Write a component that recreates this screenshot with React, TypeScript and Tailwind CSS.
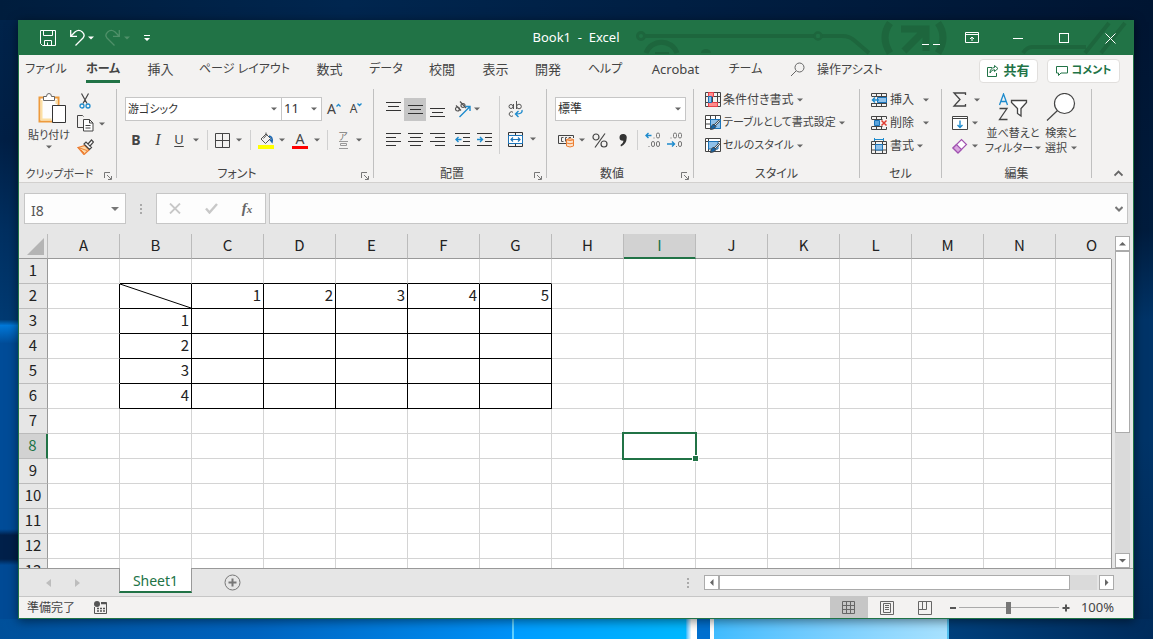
import type { ReactNode } from "react";
import clsx from "clsx";

const INK = "#444444";
const BLUE = "#1e8bcd";

const TABS = [
  { label: "ファイル", width: "w-[54px]", size: "text-xs" },
  { label: "ホーム", width: "w-[60px]", size: "text-xs", active: true },
  { label: "挿入", width: "w-[55px]", size: "text-[13px]" },
  { label: "ページ レイアウト", width: "w-[113px]", size: "text-xs" },
  { label: "数式", width: "w-[57px]", size: "text-[13px]" },
  { label: "データ", width: "w-14", size: "text-xs" },
  { label: "校閲", width: "w-14", size: "text-[13px]" },
  { label: "表示", width: "w-[51px]", size: "text-[13px]" },
  { label: "開発", width: "w-[54px]", size: "text-[13px]" },
  { label: "ヘルプ", width: "w-[60px]", size: "text-xs" },
  { label: "Acrobat", width: "w-[81px]", size: "text-[13px]" },
  { label: "チーム", width: "w-[59px]", size: "text-xs" },
];

const COLUMNS = "ABCDEFGHIJKLMNO".split("");
const ROWS = Array.from({ length: 13 }, (_, i) => i + 1);

const CELLS: Record<string, string> = {
  C2: "1",
  D2: "2",
  E2: "3",
  F2: "4",
  G2: "5",
  B3: "1",
  B4: "2",
  B5: "3",
  B6: "4",
};

type BtnProps = { label: string; className?: string; children?: ReactNode };

const Btn = ({ label, className, children }: BtnProps) => (
  <button
    type="button"
    aria-label={label}
    className={clsx("flex shrink-0 items-center justify-center", className)}
  >
    {children}
  </button>
);

const Arrow = ({ color = "#666666" }: { color?: string }) => (
  <svg width="6" height="4" viewBox="0 0 6 4" className="shrink-0">
    <path d="M0 0.5h6L3 3.5z" fill={color} />
  </svg>
);

const Sep = ({ className }: { className?: string }) => (
  <div className={clsx("w-px shrink-0 bg-[#d0d0d0]", className)} />
);

/* ---------- title bar ---------- */

const TitleArt = () => (
  <svg
    width="498"
    height="34"
    viewBox="0 0 498 34"
    fill="none"
    stroke="#1d663d"
    className="absolute top-0 right-0"
  >
    <circle cx="6" cy="15" r="3.5" strokeWidth="3" />
    <path d="M10 15h169M187 15h20q8 0 13 5l14 12" strokeWidth="4" />
    <circle cx="183" cy="15" r="3.5" strokeWidth="2.5" />
    <path d="M11 32a16.500 16.500 0 0 1 31 0" strokeWidth="5" />
    <path d="M20 32h14" strokeWidth="2" />
    <path d="M66 32a5 4 0 0 1 10 0z" fill="#1d663d" stroke="none" />
    <path d="M255 2q-10 14 0 30M303 2q10 14 0 30" strokeWidth="7" />
    <path d="M266 8h25v22M289 10l-20 20" strokeWidth="7" />
    <path d="M388 32q4-6 9-6h54M450 32L474 2M466 32L490 2" strokeWidth="4" />
  </svg>
);

const TitleBar = () => (
  <header className="relative grid h-[34px] shrink-0 grid-cols-[1fr_auto_1fr] items-center bg-[#217346] text-white">
    <TitleArt />
    <div className="relative flex items-center pl-5">
      <Btn label="上書き保存" className="w-[18px]">
        <svg width="18" height="18" viewBox="0 0 18 18" fill="none" stroke="#fff">
          <path d="M1.5 1.5h15v15H3.5l-2-2z" />
          <path d="M4.500 1.500v5h9v-5M5.500 16.500v-5h7v5M8.500 16v-2.500" />
        </svg>
      </Btn>
      <Btn label="元に戻す" className="ml-3 w-[18px]">
        <svg width="18" height="18" viewBox="0 0 18 18" fill="none" stroke="#fff" strokeWidth="1.3">
          <path d="M1.700 1v6.300H8M2 7l4.200-4.200Q10 0 13.300 3T14 9l-7.500 7.500" />
        </svg>
      </Btn>
      <Btn label="元に戻すの一覧" className="w-2">
        <Arrow color="#ffffff" />
      </Btn>
      <Btn label="やり直し" className="ml-2 w-[18px]">
        <svg width="18" height="18" viewBox="0 0 18 18" fill="none" stroke="#4f9069" strokeWidth="1.3">
          <path d="M16.300 1v6.300H10M16 7l-4.200-4.200Q8 0 4.700 3T4 9l7.500 7.500" />
        </svg>
      </Btn>
      <Btn label="やり直しの一覧" className="ml-0.5 w-2">
        <Arrow color="#4f9069" />
      </Btn>
      <Btn label="クイック アクセスのカスタマイズ" className="ml-3 w-2">
        <svg width="6" height="6" viewBox="0 0 6 6">
          <path d="M0 0h6v1H0zM0 3h6L3 6z" fill="#fff" />
        </svg>
      </Btn>
    </div>
    <h1 className="relative text-[13px] whitespace-pre">Book1  -  Excel</h1>
    <div className="relative flex items-center justify-end">
      <div className="mr-[9px] flex gap-1 pt-3">
        <span className="h-px w-[7px] bg-white" />
        <span className="h-px w-[7px] bg-white" />
      </div>
      <Btn label="リボンの表示オプション" className="h-8 w-[46px]">
        <svg width="14" height="12" viewBox="0 0 14 12" fill="none" stroke="#fff">
          <path d="M0.500 0.500h13v10H0.500zM1 2.500h12M7 9V5M5 7l2-2 2 2" />
        </svg>
      </Btn>
      <Btn label="最小化" className="h-8 w-[46px]">
        <span className="h-px w-[10px] bg-white" />
      </Btn>
      <Btn label="最大化" className="h-8 w-[46px]">
        <span className="size-[10px] border border-white" />
      </Btn>
      <Btn label="閉じる" className="h-8 w-[46px]">
        <svg width="11" height="11" viewBox="0 0 11 11" stroke="#fff">
          <path d="M0.500 0.500l10 10M10.500 0.500l-10 10" />
        </svg>
      </Btn>
    </div>
  </header>
);

/* ---------- ribbon tabs ---------- */

const RibbonTabs = () => (
  <nav className="flex h-[31px] shrink-0 items-center bg-[#f3f2f1] text-[#444444]">
    {TABS.map((tab) => (
      <button
        key={tab.label}
        type="button"
        className={clsx(
          "flex h-[31px] shrink-0 justify-center whitespace-nowrap",
          tab.width,
          tab.size
        )}
      >
        <span
          className={clsx(
            "h-7 pt-0.5 leading-6",
            tab.active && "border-b-[3px] border-[#217346] font-bold"
          )}
        >
          {tab.label}
        </span>
      </button>
    ))}
    <button type="button" className="ml-[15px] flex items-center gap-3 pb-0.5 text-xs whitespace-nowrap">
      <svg width="15" height="15" viewBox="0 0 15 15" fill="none" stroke="#666" className="shrink-0">
        <circle cx="9.500" cy="5.500" r="4.500" />
        <path d="M6 9l-5 5" />
      </svg>
      操作アシスト
    </button>
    <div className="ml-auto flex gap-[9px] pr-[13px] text-[13px] font-bold text-[#217346]">
      <button
        type="button"
        className="flex h-6 w-[59px] items-center justify-center gap-1 rounded-sm border border-[#e1dfdd] bg-white"
      >
        <svg width="12" height="12" viewBox="0 0 12 12" fill="none" stroke="#217346">
          <path d="M5 2.500H0.500v9h9V8M7.500 0.500L11 3.500 7.500 6.500V4.700Q4.500 4.500 3 8q0-5 4.500-5.500z" />
        </svg>
        共有
      </button>
      <button
        type="button"
        className="flex h-6 w-[73px] items-center justify-center gap-1 rounded-sm border border-[#e1dfdd] bg-white text-[11px] whitespace-nowrap"
      >
        <svg width="12" height="12" viewBox="0 0 12 12" fill="none" stroke="#217346" className="shrink-0">
          <path d="M0.500 1.500h11v6.500H5L2.500 10.500V8h-2z" />
        </svg>
        コメント
      </button>
    </div>
  </nav>
);

/* ---------- ribbon ---------- */

type GroupProps = {
  name: string;
  className: string;
  launcher?: boolean;
  children: ReactNode;
};

const Group = ({ name, className, launcher, children }: GroupProps) => (
  <section
    aria-label={name}
    className={clsx("flex shrink-0 flex-col border-r border-[#c0c0c0]", className)}
  >
    <div className="flex h-[77px]">{children}</div>
    <div className="flex h-[13px] items-center leading-3">
      <span
        className={clsx(
          "flex-1 pt-1 text-center whitespace-nowrap",
          name.length > 5 ? "text-[11px]" : "text-xs"
        )}
      >
        {name}
      </span>
      {launcher && (
        <Btn label={name + "の設定"} className="w-4 pt-2">
          <svg width="8" height="8" viewBox="0 0 8 8" fill="none" stroke="#777">
            <path d="M0.500 6V0.500H6M3 3l4 4M7.500 4v3.500H4" />
          </svg>
        </Btn>
      )}
    </div>
  </section>
);

const ClipboardGroup = () => (
  <Group name="クリップボード" className="w-[98px]" launcher>
    <button
      type="button"
      className="ml-1.5 flex w-12 flex-col items-center pt-1 text-[11px] leading-5 whitespace-nowrap"
    >
      <svg width="29" height="32" viewBox="0 0 29 32" fill="none" className="ml-1.5">
        <path d="M1.500 4.500h19v24h-19z" fill="#fdfdfd" stroke="#ed9a3d" strokeWidth="2" />
        <path d="M3.500 7v19.500h10M18.500 7v4" stroke="#fce0a4" strokeWidth="2" />
        <path d="M5.500 7.500v-4h3q0-3 2.500-3t2.500 3h3v4z" fill="#fff" stroke="#666" />
        <path d="M14.500 12.500h13v17h-13z" fill="#fff" stroke="#333" />
      </svg>
      <span>貼り付け</span>
      <Arrow />
    </button>
    <div className="ml-0.5">
      <Btn label="切り取り" className="h-[23px] w-5">
        <svg width="12" height="16" viewBox="0 0 12 16" fill="none">
          <path d="M2.500 0.500l5.500 10M9.500 0.500L4 10.500" stroke={INK} strokeWidth="1.200" />
          <circle cx="3" cy="13" r="2" stroke={BLUE} strokeWidth="1.300" />
          <circle cx="9" cy="13" r="2" stroke={BLUE} strokeWidth="1.300" />
        </svg>
      </Btn>
      <Btn label="コピー" className="h-[23px] gap-[5px] pl-0.5">
        <svg width="17" height="17" viewBox="0 0 17 17" fill="none" stroke="#444">
          <path d="M6 12.500H0.500v-12h5l1 1" />
          <path d="M6.500 4.500h6l3.500 3.500v8H6.500zM12.500 4.500V8H16M8.500 10.500h5M8.500 13h5" fill="#fff" />
        </svg>
        <Arrow />
      </Btn>
      <Btn label="書式のコピー" className="h-[23px] w-5">
        <svg width="17" height="16" viewBox="0 0 17 16" fill="none">
          <path d="M1 8.500l7-2 4 4.500-5 4.500z" fill="#fbd9a8" stroke="#ed7d31" strokeWidth="1.300" />
          <path d="M4 11l3 3M1 8.500l9 3" stroke="#ed7d31" />
          <path d="M7 5l5.500 5.500 2-2L9 3zM11 5l3.500-4 2 2-3.500 4" fill="#fff" stroke="#444" strokeWidth="1.200" />
        </svg>
      </Btn>
    </div>
  </Group>
);

const FontGroup = () => (
  <Group name="フォント" className="w-[257px]" launcher>
    <div className="pt-2 pl-2">
      <div className="flex h-6 items-center">
        <label className="flex h-6 w-[157px] items-center border border-[#c6c6c6] bg-white pr-1">
          <input
            aria-label="フォント名"
            defaultValue="游ゴシック"
            className="min-w-0 flex-1 pl-0.5 text-[11px] text-[#333333] outline-none"
          />
          <Arrow />
        </label>
        <label className="flex h-6 w-10 items-center border border-l-0 border-[#c6c6c6] bg-white pr-1">
          <input
            aria-label="フォント サイズ"
            defaultValue="11"
            className="w-6 min-w-0 flex-1 pl-0.5 text-[13px] text-[#333333] outline-none"
          />
          <Arrow />
        </label>
        <Btn label="フォント サイズの拡大" className="ml-px w-[22px]">
          <span className="text-sm leading-4">A</span>
          <svg width="5" height="13" viewBox="0 0 5 13" fill="none" stroke={BLUE} strokeWidth="1.300">
            <path d="M0.500 3.500l2-2 2 2" />
          </svg>
        </Btn>
        <Btn label="フォント サイズの縮小" className="w-[22px]">
          <span className="text-xs leading-4">A</span>
          <svg width="5" height="13" viewBox="0 0 5 13" fill="none" stroke={BLUE} strokeWidth="1.300">
            <path d="M0.500 0.500l2 2 2-2" />
          </svg>
        </Btn>
      </div>
      <div className="mt-[7px] flex h-6 items-center">
        <Btn label="太字" className="w-[22px] text-sm font-bold">B</Btn>
        <Btn label="斜体" className="w-[22px] font-['Liberation_Serif',serif] text-base italic">I</Btn>
        <Btn label="下線" className="w-5 text-[13px] underline underline-offset-2">U</Btn>
        <Btn label="下線の種類" className="w-3.5">
          <Arrow />
        </Btn>
        <Sep className="ml-1 h-5" />
        <Btn label="罫線" className="ml-0.5 w-6">
          <svg width="15" height="15" viewBox="0 0 15 15" fill="none" stroke="#444">
            <path d="M0.500 0.500h14v14H0.500zM7.500 0.500v14M0.500 7.500h14" />
          </svg>
        </Btn>
        <Btn label="罫線の種類" className="w-2.5">
          <Arrow />
        </Btn>
        <Sep className="ml-1.5 h-5" />
        <Btn label="塗りつぶしの色" className="ml-[3px] w-6">
          <svg width="16" height="17" viewBox="0 0 16 17" fill="none">
            <path d="M8 2L3 7l4.500 4.500L12.500 6.500zM8 2V0.500M5.500 6.500l3.500-4" stroke="#555" />
            <path d="M11 4q4 1 3 6l-2-2.500" stroke="#1a66b0" strokeWidth="1.500" />
            <path d="M0 13h16v4H0z" fill="#ffff00" />
          </svg>
        </Btn>
        <Btn label="塗りつぶしの色一覧" className="w-2">
          <Arrow />
        </Btn>
        <Btn label="フォントの色" className="w-7 flex-col">
          <span className="text-sm leading-[14px]">A</span>
          <span className="h-[3px] w-4 bg-[#ff0000]" />
        </Btn>
        <Btn label="フォントの色一覧" className="w-1.5">
          <Arrow />
        </Btn>
        <Sep className="ml-[7px] h-5" />
        <Btn label="ふりがな" className="ml-0.5 w-[26px] flex-col text-[#777777]">
          <span className="text-[10px] leading-[9px]">ア</span>
          <svg width="9" height="8" viewBox="0 0 9 8" fill="none" stroke="#999">
            <path d="M0 0.500h9M1.500 2.500h6v2h-6zM0 7.500h9" />
          </svg>
        </Btn>
        <Btn label="ふりがなの設定" className="w-1.5">
          <Arrow />
        </Btn>
      </div>
    </div>
  </Group>
);

const Lines = ({ d }: { d: string }) => (
  <svg width="15" height="15" viewBox="0 0 15 15" fill="none" stroke="#333">
    <path d={d} />
  </svg>
);

const AlignGroup = () => (
  <Group name="配置" className="w-[173px]" launcher>
    <div className="pt-2 pl-2">
      <div className="flex h-6 items-center">
        <Btn label="上揃え" className="h-[23px] w-[22px]">
          <Lines d="M0 0.500h15M2 4.500h11M0 8.500h15" />
        </Btn>
        <Btn label="上下中央揃え" className="h-[23px] w-[22px] bg-[#c6c6c6]">
          <Lines d="M0 3.500h15M2 7.500h11M0 11.500h15" />
        </Btn>
        <Btn label="下揃え" className="h-[23px] w-[22px]">
          <Lines d="M0 6.500h15M2 10.500h11M0 14.500h15" />
        </Btn>
        <Btn label="方向" className="ml-0.5 w-6">
          <svg width="17" height="17" viewBox="0 0 17 17" fill="none">
            <g stroke="#555" strokeWidth="1.200">
              <circle cx="3.500" cy="8" r="2" />
              <path d="M2 4.500l5 5M6 0.500l6 6.500" />
              <circle cx="9" cy="4.500" r="2" />
            </g>
            <path d="M5.500 16L15.500 6M11.500 5.500H16V10" stroke={BLUE} strokeWidth="1.400" />
          </svg>
        </Btn>
        <Btn label="方向の一覧" className="w-1.5">
          <Arrow />
        </Btn>
      </div>
      <div className="mt-1.5 flex h-6 items-center">
        <Btn label="左揃え" className="w-[22px]">
          <Lines d="M0 1.500h15M0 5.500h10M0 9.500h15M0 13.500h10" />
        </Btn>
        <Btn label="中央揃え" className="w-[22px]">
          <Lines d="M0 1.500h15M2 5.500h11M0 9.500h15M2 13.500h11" />
        </Btn>
        <Btn label="右揃え" className="w-[22px]">
          <Lines d="M0 1.500h15M5 5.500h10M0 9.500h15M5 13.500h10" />
        </Btn>
        <Btn label="インデントを減らす" className="ml-[3px] w-[22px]">
          <svg width="15" height="15" viewBox="0 0 15 15" fill="none" stroke="#333">
            <path d="M0 1.500h15M8 5.500h7M8 9.500h7M0 13.500h15" />
            <path d="M1 7.500h5.500M3.500 5l-2.500 2.500 2.500 2.500" stroke={BLUE} strokeWidth="1.400" />
          </svg>
        </Btn>
        <Btn label="インデントを増やす" className="w-[22px]">
          <svg width="15" height="15" viewBox="0 0 15 15" fill="none" stroke="#333">
            <path d="M0 1.500h15M8 5.500h7M8 9.500h7M0 13.500h15" />
            <path d="M0 7.500h5.500M3 5l2.500 2.500L3 10" stroke={BLUE} strokeWidth="1.400" />
          </svg>
        </Btn>
      </div>
    </div>
    <Sep className="mt-[7px] ml-1 h-[58px]" />
    <div className="pt-2">
      <div className="flex h-6 items-center">
        <Btn label="折り返して全体を表示する" className="w-8">
          <svg width="16" height="17" viewBox="0 0 16 17" fill="none" stroke="#555">
            <circle cx="3" cy="5.500" r="2" />
            <path d="M5.500 3v5M8.500 0v8" />
            <circle cx="11" cy="5.500" r="2.300" />
            <path d="M5 11.300a2.300 2.300 0 1 0 0 3.500" />
            <path d="M14 9q1 4-6 4M10.500 10L7.500 13l3 3" stroke={BLUE} strokeWidth="1.400" />
          </svg>
        </Btn>
      </div>
      <div className="mt-1.5 flex h-6 items-center">
        <Btn label="セルを結合して中央揃え" className="w-[30px]">
          <svg width="15" height="15" viewBox="0 0 15 15" fill="none" stroke="#333">
            <path d="M0.500 0.500h14v14H0.500zM7.500 0v3M7.500 12v3" />
            <path d="M0.500 3.500h14v8H0.500z" fill="#fff" stroke="#1a73b8" />
            <path d="M3 7.500h9M5 5.500l-2 2 2 2M10 5.500l2 2-2 2" stroke="#1a73b8" strokeWidth="1.200" />
          </svg>
        </Btn>
        <Btn label="結合の一覧" className="w-1.5">
          <Arrow />
        </Btn>
      </div>
    </div>
  </Group>
);

const NumberGroup = () => (
  <Group name="数値" className="w-[147px]" launcher>
    <div className="pt-2 pl-2">
      <div className="relative flex h-6 w-[131px] items-center border border-[#c6c6c6] bg-white">
        <select
          aria-label="表示形式"
          className="h-[22px] w-full appearance-none pl-0.5 text-xs text-[#333333]"
        >
          <option>標準</option>
        </select>
        <span className="pointer-events-none absolute right-1 flex">
          <Arrow />
        </span>
      </div>
      <div className="mt-[7px] flex h-6 items-center">
        <Btn label="通貨表示形式" className="w-[22px]">
          <svg width="17" height="15" viewBox="0 0 17 15" fill="none">
            <path d="M8 10.500H0.500v-8h15V5" stroke="#444" />
            <path d="M5.500 4.500h-2v4h2M9 4.500H7.500v4M13 4.500h-2v2" stroke="#555" />
            <path d="M8.500 6.500v6.500q3.500 2 7 0V6.500q-3.500-1.500-7 0z" fill="#fce4cc" stroke="#ed7d31" />
            <path d="M8.500 6.800q3.500 1.500 7 0M8.500 10q3.500 1.500 7 0" stroke="#ed7d31" />
          </svg>
        </Btn>
        <Btn label="通貨の一覧" className="w-2.5">
          <Arrow />
        </Btn>
        <Btn label="パーセント スタイル" className="ml-px w-6">
          <svg width="16" height="15" viewBox="0 0 16 15" fill="none" stroke="#444" strokeWidth="1.200">
            <circle cx="4" cy="4" r="3" />
            <circle cx="12" cy="11" r="3" />
            <path d="M13 0.500L3 14.500" />
          </svg>
        </Btn>
        <Btn label="桁区切りスタイル" className="w-[22px]">
          <svg width="8" height="13" viewBox="0 0 8 13" fill="#333">
            <path d="M4 0a3.500 3.500 0 0 1 3.700 4Q7.500 10 2 12.500L1.500 11Q4.500 9 4.500 6.800 0.500 7 0.500 3.500A3.500 3.500 0 0 1 4 0z" />
          </svg>
        </Btn>
        <Sep className="ml-[3px] h-5" />
        <Btn label="小数点以下の表示桁数を増やす" className="ml-1 w-[22px]">
          <svg width="16" height="16" viewBox="0 0 16 16" fill="none" stroke="#777">
            <path d="M6.500 3.500H1M3.500 1L1 3.500 3.500 6" stroke={BLUE} strokeWidth="1.400" />
            <rect x="11.500" y="1" width="3" height="5" rx="1.500" />
            <rect x="6.500" y="9.500" width="3" height="5" rx="1.500" />
            <rect x="11.500" y="9.500" width="3" height="5" rx="1.500" />
            <path d="M8.500 6h1M3.500 14.500h1" />
          </svg>
        </Btn>
        <Btn label="小数点以下の表示桁数を減らす" className="w-[22px]">
          <svg width="16" height="16" viewBox="0 0 16 16" fill="none" stroke="#777">
            <path d="M0 12h7.500M5 9.500L7.500 12 5 14.500" stroke={BLUE} strokeWidth="1.400" />
            <rect x="6.500" y="1" width="3" height="5" rx="1.500" />
            <rect x="11.500" y="1" width="3" height="5" rx="1.500" />
            <rect x="11.500" y="9.500" width="3" height="5" rx="1.500" />
            <path d="M3.500 6h1M9 14.500h1" />
          </svg>
        </Btn>
      </div>
    </div>
  </Group>
);

type RowBtnProps = { icon: ReactNode; label: string; arrow?: string; small?: boolean };

const RowBtn = ({ icon, label, arrow, small }: RowBtnProps) => (
  <button
    type="button"
    className={clsx(
      "flex h-[23px] items-center pb-0.5 whitespace-nowrap",
      small ? "text-[11px]" : "text-xs"
    )}
  >
    {icon}
    <span className="ml-0.5">{label}</span>
    <span className={clsx("flex", arrow ?? "ml-[3px]")}>
      <Arrow />
    </span>
  </button>
);

const Brush = () => (
  <>
    <path d="M14.500 5.500L9 11" stroke="#444" strokeWidth="2.200" />
    <path d="M14.300 5.700L10 10" stroke="#d0e4f5" />
    <path d="M9 9.500q-3 0-3.500 5 4 0 5.500-3z" fill="#1565a9" />
  </>
);

const StyleGroup = () => (
  <Group name="スタイル" className="w-[166px]">
    <div className="pl-[11px]">
      <RowBtn
        label="条件付き書式"
        icon={
          <svg width="16" height="15" viewBox="0 0 16 15" fill="none" stroke="#444">
            <path d="M0.500 0.500h15v14H0.500zM3.500 0.500v14M7.500 0.500v14M12.500 0.500v14M0.500 4.500h15M0.500 10.500h15" />
            <path d="M3.500 0.500h5v4h-5zM3.500 10.500h9v4h-9z" fill="#ff8c8c" stroke="#e8404a" />
            <path d="M3.500 4.500h3v6h-3z" fill="#8fc1ea" stroke="#1a73b8" />
          </svg>
        }
      />
      <RowBtn
        small
        label="テーブルとして書式設定"
        icon={
          <svg width="16" height="15" viewBox="0 0 16 15" fill="none" stroke="#444">
            <path d="M0.500 0.500h15v13H0.500zM5.500 0.500v13M10.500 0.500v13M0.500 4.500h15M0.500 9h15" fill="#fff" />
            <path d="M5.500 4.500h10v9h-10z" fill="#8fc1ea" stroke="#1a73b8" />
            <Brush />
          </svg>
        }
      />
      <RowBtn
        small
        label="セルのスタイル"
        icon={
          <svg width="16" height="15" viewBox="0 0 16 15" fill="none" stroke="#444">
            <path d="M0.500 0.500h15v13H0.500zM3.500 0.500v13M0.500 3.500h15" fill="#fff" />
            <path d="M3.500 3.500h9.500v7.500h-9.500z" fill="#8fc1ea" stroke="#1a73b8" />
            <Brush />
          </svg>
        }
      />
    </div>
  </Group>
);

const CellGroup = () => (
  <Group name="セル" className="w-[82px]">
    <div className="pl-[11px]">
      <RowBtn
        label="挿入"
        arrow="ml-[9px]"
        icon={
          <svg width="17" height="14" viewBox="0 0 17 14" fill="none" stroke="#444">
            <path d="M0.500 3V0.500h15v13h-15V10M5.500 0.500v3M10.500 0.500v13M5.500 10v3.500M0.500 10.500h15M0.500 3.500h15" />
            <path d="M6.500 4.500h9v5h-9z" fill="#8fc1ea" stroke="#1a73b8" />
            <path d="M8 7H1.500M4 4.500L1.500 7l2.500 2.500" stroke={BLUE} strokeWidth="1.500" />
          </svg>
        }
      />
      <RowBtn
        label="削除"
        arrow="ml-[9px]"
        icon={
          <svg width="17" height="14" viewBox="0 0 17 14" fill="none" stroke="#444">
            <path d="M0.500 3V0.500h15V3M0.500 11v2.500h15V11M5.500 0.500v3M10.500 0.500v3M5.500 10v3.500M10.500 10v3.500M0.500 3.500h11M0.500 10.500h11" />
            <path d="M3.500 4.500h5v5h-5z" fill="#5aa3dc" stroke="#1a73b8" />
            <path d="M10.500 4.500l5 5M15.500 4.500l-5 5" stroke="#e03c31" strokeWidth="1.500" />
          </svg>
        }
      />
      <RowBtn
        label="書式"
        icon={
          <svg width="17" height="16" viewBox="0 0 17 16" fill="none" stroke="#444">
            <path d="M0.500 3.500h15v12H0.500zM4.500 3.500v12M11.500 3.500v12M0.500 6.500h15M0.500 12h15" />
            <path d="M4.500 6.500h7v5.500h-7z" fill="#8fc1ea" stroke="#1a73b8" />
            <path d="M4 1.500h8M3.500 0v3M12.500 0v3" stroke={BLUE} />
          </svg>
        }
      />
    </div>
  </Group>
);

const EditGroup = () => (
  <Group name="編集" className="w-[150px]">
    <div className="ml-2.5 w-[30px]">
      <Btn label="オート SUM" className="h-[23px] gap-1.5 pb-0.5">
        <svg width="16" height="15" viewBox="0 0 16 15" fill="none" stroke="#444" strokeWidth="1.300">
          <path d="M13.500 3V1H2l6 6.500L2 14h11.500v-2" />
        </svg>
        <Arrow />
      </Btn>
      <Btn label="フィル" className="h-[23px] gap-1 pb-0.5">
        <svg width="16" height="14" viewBox="0 0 16 14" fill="none" stroke="#444">
          <path d="M0.500 0.500h15v13H0.500zM0.500 2.500h15" fill="#fff" />
          <path d="M8 4.500v7M5.500 9L8 11.500 10.500 9" stroke={BLUE} strokeWidth="1.400" />
        </svg>
        <Arrow />
      </Btn>
      <Btn label="クリア" className="h-[23px] gap-1 pb-0.5">
        <svg width="16" height="16" viewBox="0 0 16 16" fill="none" stroke="#a052b0" strokeWidth="1.200">
          <path d="M1 10L9.500 1.500 14.500 6.500 6 15z" fill="#fff" />
          <path d="M1 10l3.500-3.500 5 5L6 15z" fill="#d9a6e0" />
        </svg>
        <Arrow />
      </Btn>
    </div>
    <button
      type="button"
      className="ml-1 flex w-[54px] flex-col items-center pt-1 text-[11px] leading-[15px] whitespace-nowrap"
    >
      <svg width="30" height="28" viewBox="0 0 30 28" fill="none" strokeWidth="1.300" className="mb-1">
        <path d="M1.500 12L5.500 1l4 11M3 8.500h5" stroke={BLUE} />
        <path d="M1.500 15.500h7.500L1.500 26.500H9.500" stroke="#444" />
        <path d="M13.500 7.500h15v2l-5.500 6v7.500l-3.500-2.500v-5l-6-6z" fill="#fff" stroke="#444" />
      </svg>
      <span>並べ替えと</span>
      <span className="flex items-center gap-0.5">
        フィルター
        <Arrow />
      </span>
    </button>
    <button
      type="button"
      className="ml-0.5 flex w-[38px] flex-col items-center pt-1 text-[11px] leading-[15px] whitespace-nowrap"
    >
      <svg width="30" height="28" viewBox="0 0 30 28" fill="none" stroke="#444" strokeWidth="1.200" className="mb-1">
        <circle cx="18.500" cy="10.500" r="10" fill="#fff" />
        <path d="M11.500 17.500L1 27.500" />
      </svg>
      <span>検索と</span>
      <span className="flex items-center gap-1">
        選択
        <Arrow />
      </span>
    </button>
  </Group>
);

const Ribbon = () => (
  <div className="flex h-[97px] shrink-0 border-b border-[#d2d0ce] bg-[#f3f2f1] pt-[3px] pb-1 text-[#444444]">
    <ClipboardGroup />
    <FontGroup />
    <AlignGroup />
    <NumberGroup />
    <StyleGroup />
    <CellGroup />
    <EditGroup />
    <div className="flex flex-1 items-end justify-end pr-2.5">
      <Btn label="リボンを折りたたむ">
        <svg width="9" height="8" viewBox="0 0 9 8" fill="none" stroke="#666" strokeWidth="1.800">
          <path d="M0.500 5.500l4-4 4 4" />
        </svg>
      </Btn>
    </div>
  </div>
);

/* ---------- formula bar ---------- */

const Dots = () => (
  <div className="flex flex-col gap-0.5">
    <span className="size-0.5 bg-[#aaaaaa]" />
    <span className="size-0.5 bg-[#aaaaaa]" />
    <span className="size-0.5 bg-[#aaaaaa]" />
  </div>
);

const FormulaBar = () => (
  <div className="flex h-[51px] shrink-0 items-start bg-[#e6e6e6] pt-2.5 pr-[5px] pl-[5px]">
    <label className="flex h-[31px] w-[102px] items-center border border-[#c6c6c6] bg-[#fdfdfd] pr-1.5">
      <input
        aria-label="名前ボックス"
        defaultValue="I8"
        className="min-w-0 flex-1 pt-1 pl-1.5 text-sm text-[#555555] outline-none"
      />
      <svg width="8" height="4" viewBox="0 0 8 4">
        <path d="M0 0h8L4 4z" fill="#777" />
      </svg>
    </label>
    <div className="flex h-[31px] w-[30px] items-center justify-center">
      <Dots />
    </div>
    <div className="flex h-[31px] w-[110px] items-center border border-[#c6c6c6] bg-[#fdfdfd]">
      <Btn label="キャンセル" className="h-7 w-9">
        <svg width="12" height="11" viewBox="0 0 12 11" stroke="#c8c8c8" strokeWidth="1.800">
          <path d="M1 0.500l10 10M11 0.500l-10 10" />
        </svg>
      </Btn>
      <Btn label="入力" className="h-7 w-9">
        <svg width="13" height="11" viewBox="0 0 13 11" fill="none" stroke="#c8c8c8" strokeWidth="2.400">
          <path d="M1 5.500l3.500 4L12 1" />
        </svg>
      </Btn>
      <Btn
        label="関数の挿入"
        className="h-7 w-9 font-['Liberation_Serif',serif] text-[15px] font-bold text-[#666666] italic"
      >
        f<span className="pt-0.5 text-[11px]">x</span>
      </Btn>
    </div>
    <label className="ml-[3px] flex h-[31px] flex-1 items-center border border-[#c6c6c6] bg-[#fdfdfd] pr-1">
      <input aria-label="数式バー" className="min-w-0 flex-1 px-1 text-sm outline-none" />
      <svg width="8" height="6" viewBox="0 0 8 6" fill="none" stroke="#777" strokeWidth="2">
        <path d="M0.500 1L4 4.500 7.500 1" />
      </svg>
    </label>
  </div>
);

/* ---------- sheet ---------- */

const inRange = (col: number, row: number, c0: number, c1: number, r0: number, r1: number) =>
  col >= c0 && col <= c1 && row >= r0 && row <= r1;

const Grid = () => (
  <table className="w-[1109px] table-fixed border-separate border-spacing-0 font-['Noto_Sans_CJK_JP',sans-serif] text-[15px] leading-[22px]">
    <colgroup>
      <col className="w-[29px]" />
      {COLUMNS.map((c) => (
        <col key={c} className="w-[72px]" />
      ))}
    </colgroup>
    <thead>
      <tr className="h-[25px] bg-[#e6e6e6]">
        <th className="h-[25px] border-r border-b border-r-[#bbbbbb] border-b-[#999999] p-0">
          <svg width="17" height="17" viewBox="0 0 17 17" className="ml-2 block">
            <path d="M17 0v17H0z" fill="#b4b4b4" />
          </svg>
        </th>
        {COLUMNS.map((c) => (
          <th
            key={c}
            scope="col"
            className={clsx(
              "h-[25px] border-r border-r-[#bbbbbb] p-0 font-normal",
              c === "I"
                ? "border-b-2 border-b-[#217346] bg-[#d2d2d2] pb-px text-[#217346]"
                : "border-b border-b-[#999999] pb-0.5 text-[#222222]"
            )}
          >
            {c}
          </th>
        ))}
      </tr>
    </thead>
    <tbody>
      {ROWS.map((r) => (
        <tr key={r} className="h-[25px]">
          <th
            scope="row"
            className={clsx(
              "h-[25px] border-b border-b-[#bbbbbb] p-0 pb-0.5 font-normal",
              r === 8
                ? "border-r-2 border-r-[#217346] bg-[#d2d2d2] text-[#217346]"
                : "border-r border-r-[#999999] bg-[#e6e6e6] text-[#222222]"
            )}
          >
            {r}
          </th>
          {COLUMNS.map((c, i) => (
            <td
              key={c}
              className={clsx(
                "h-[25px] border-r border-b text-right text-[#222222]",
                inRange(i, r, 0, 6, 2, 6) ? "border-r-black" : "border-r-[#d4d4d4]",
                inRange(i, r, 1, 6, 1, 6) ? "border-b-black" : "border-b-[#d4d4d4]",
                c + r === "B2" ? "p-0" : "p-0 pr-0.5 pb-0.5",
                c + r === "I8" && "relative"
              )}
            >
              {CELLS[c + r]}
              {c + r === "B2" && (
                <svg width="71" height="24" viewBox="0 0 71 24" stroke="#000" className="block">
                  <path d="M0 0l71 24" />
                </svg>
              )}
              {c + r === "I8" && (
                <>
                  <span className="absolute -inset-0.5 z-10 border-2 border-[#217346]" />
                  <span className="absolute -right-1 -bottom-1 z-10 size-[7px] border border-white bg-[#217346]" />
                </>
              )}
            </td>
          ))}
        </tr>
      ))}
    </tbody>
  </table>
);

const ScrollBtn = ({ label, d }: { label: string; d: string }) => (
  <Btn label={label} className="size-[15px] border border-[#ababab] bg-white">
    <svg width="7" height="7" viewBox="0 0 7 7" fill="#666">
      <path d={d} />
    </svg>
  </Btn>
);

const Sheet = () => (
  <main className="flex min-h-0 flex-1 bg-[#e6e6e6]">
    <div className="flex min-w-0 flex-1 overflow-hidden bg-white">
      <Grid />
    </div>
    <div className="mt-[25px] w-px bg-[#999999]" />
    <div className="flex w-[21px] flex-col pt-0.5 pl-[3px]">
      <ScrollBtn label="上へスクロール" d="M0 5.500h7L3.500 2z" />
      <div className="flex w-[15px] flex-1 flex-col bg-[#dadada]">
        <div className="flex-[3] border border-[#ababab] bg-white" />
        <div className="flex-[2]" />
      </div>
      <ScrollBtn label="下へスクロール" d="M0 2h7L3.500 5.500z" />
    </div>
  </main>
);

const SheetTabs = () => (
  <div className="flex h-[29px] shrink-0 border-b border-[#c6c6c6] bg-[#e6e6e6]">
    <div className="flex w-[100px] items-center gap-6 border-t border-[#999999] pl-[27px]">
      <Btn label="前のシート">
        <svg width="5" height="8" viewBox="0 0 5 8" fill="#bdbdbd">
          <path d="M5 0v8L0 4z" />
        </svg>
      </Btn>
      <Btn label="次のシート">
        <svg width="5" height="8" viewBox="0 0 5 8" fill="#bdbdbd">
          <path d="M0 0v8l5-4z" />
        </svg>
      </Btn>
    </div>
    <button
      type="button"
      className="h-[25px] w-[73px] border-x border-b-2 border-x-[#999999] border-b-[#217346] bg-white pt-0.5 text-sm leading-5 text-[#217346]"
    >
      Sheet1
    </button>
    <div className="flex flex-1 items-center border-t border-[#999999] pl-8">
      <Btn label="新しいシート">
        <svg width="17" height="17" viewBox="0 0 17 17" fill="none" stroke="#777">
          <circle cx="8.500" cy="8.500" r="7.500" />
          <path d="M8.500 4.500v8M4.500 8.500h8" strokeWidth="2" />
        </svg>
      </Btn>
      <div className="ml-auto flex items-center pr-[19px]">
        <Dots />
        <div className="ml-[15px] flex items-center">
          <ScrollBtn label="左へスクロール" d="M5.500 0v7L2 3.500z" />
          <div className="flex h-[15px] w-[378px] bg-[#dadada]">
            <div className="w-[351px] border border-[#ababab] bg-white" />
          </div>
          <div className="w-0.5" />
          <ScrollBtn label="右へスクロール" d="M2 0v7l3.500-3.500z" />
        </div>
      </div>
    </div>
  </div>
);

const StatusBar = () => (
  <footer className="flex h-[21px] shrink-0 items-center bg-[#f3f2f1] pl-2 text-xs text-[#444444]">
    <span>準備完了</span>
    <Btn label="マクロの記録" className="ml-[19px]">
      <svg width="13" height="13" viewBox="0 0 13 13" fill="none" stroke="#555">
        <path d="M0.500 6v6.500h12V1.500H7" />
        <path d="M7 2.500h6M3 7.500h2M6 7.500h2M9 7.500h2M3 10h2M6 10h2M9 10h2" strokeWidth="1.500" />
        <circle cx="3" cy="3" r="3" fill="#555" stroke="none" />
      </svg>
    </Btn>
    <div className="ml-auto flex h-[21px] items-center pr-[19px]">
      <Btn label="標準" className="h-[21px] w-[38px] bg-[#c6c6c6]">
        <svg width="13" height="13" viewBox="0 0 13 13" fill="none" stroke="#666">
          <path d="M0.500 0.500h12v12H0.500zM4.500 0v13M8.500 0v13M0 4.500h13M0 8.500h13" />
        </svg>
      </Btn>
      <Btn label="ページ レイアウト表示" className="w-[38px]">
        <svg width="14" height="14" viewBox="0 0 14 14" fill="none" stroke="#666">
          <path d="M0.500 0.500h13v13H0.500zM3.500 2.500h7v9h-7zM5 4.500h4M5 6.500h4M5 8.500h4" />
        </svg>
      </Btn>
      <Btn label="改ページ プレビュー" className="w-[38px]">
        <svg width="14" height="14" viewBox="0 0 14 14" fill="none" stroke="#666">
          <path d="M0.500 0.500h13v13H0.500zM4.500 0.500v8M8.500 0.500v8M0.500 8.500h8" />
        </svg>
      </Btn>
      <Btn label="縮小" className="ml-1 w-[11px]">
        <span className="h-0.5 w-1.5 bg-[#555555]" />
      </Btn>
      <input
        type="range"
        aria-label="ズーム"
        className="h-3 w-[100px] appearance-none bg-[linear-gradient(#aaaaaa,#aaaaaa)] bg-[length:100%_1px] bg-center bg-no-repeat [&::-webkit-slider-thumb]:h-3 [&::-webkit-slider-thumb]:w-[5px] [&::-webkit-slider-thumb]:appearance-none [&::-webkit-slider-thumb]:bg-[#777777]"
      />
      <Btn label="拡大" className="w-3.5">
        <svg width="8" height="8" viewBox="0 0 8 8" stroke="#555" strokeWidth="2">
          <path d="M4 0.500v7M0.500 4h7" />
        </svg>
      </Btn>
      <span className="ml-2 text-[13px]">100%</span>
    </div>
  </footer>
);

/* ---------- desktop ---------- */

const App = () => (
  <div className="flex h-screen flex-col overflow-hidden bg-[#001f45] font-['Noto_Sans','Noto_Sans_CJK_JP',sans-serif] [font-feature-settings:'palt']">
    <div className="h-5 shrink-0 bg-linear-to-r from-[#001d3d] via-[#00264f] via-30% to-[#001532]" />
    <div className="flex min-h-0 flex-1">
      <div className="w-[18px] shrink-0 bg-[linear-gradient(#00234a,#001f45_20%,#002f60_35%,#003a72_50%,#0078d8_51%,#004c98_54%,#004c98_85%,#00204a_86%,#00204a_90%,#004a95_91%)]" />
      <div className="relative z-10 flex min-w-0 flex-1 flex-col border border-[#217346] shadow-[0_2px_10px_rgba(0,0,0,0.5)]">
        <TitleBar />
        <RibbonTabs />
        <Ribbon />
        <FormulaBar />
        <Sheet />
        <SheetTabs />
        <StatusBar />
      </div>
      <div className="w-[19px] shrink-0 bg-[linear-gradient(#001532,#001c3d_35%,#003468_50%,#003468_70%,#002a58)]" />
    </div>
    <div className="flex h-5 shrink-0">
      <div className="w-[512px] bg-linear-to-r from-[#00509a] via-[#0064c0] to-[#0092f8]" />
      <div className="w-[174px] border-l-2 border-[#60d0ff] bg-linear-to-r from-[#009cff] to-[#00b8ff]" />
      <div className="w-[11px] bg-linear-to-r from-[#00b8ff] via-white to-white" />
      <div className="w-[13px] bg-[#0070d0]" />
      <div className="w-1 bg-white" />
      <div className="w-[235px] border-r-2 border-[#50c0f0] bg-linear-to-r from-[#40bcff] to-[#a8e2ff]" />
      <div className="flex-1 bg-linear-to-r from-[#00407c] to-[#002c5c]" />
    </div>
  </div>
);

export default App;
